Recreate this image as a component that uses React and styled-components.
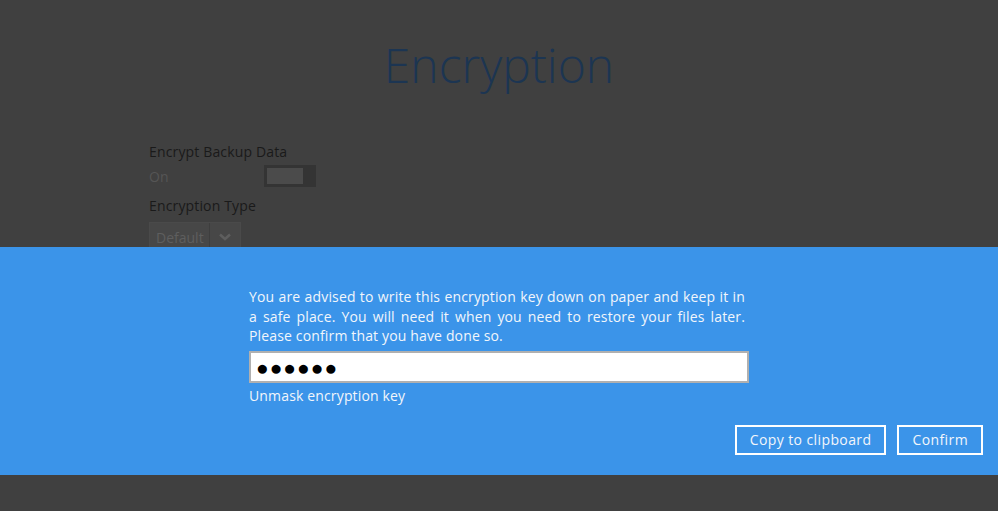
import React from 'react'
import styled, {createGlobalStyle} from 'styled-components'

const Global = createGlobalStyle`
  html, body {
    margin: 0;
    padding: 0;
    background: #404040;
  }
  body {
    font-family: "Open Sans", "Noto Sans", sans-serif;
  }
`

const Page = styled.div`
  width: 998px;
  height: 511px;
  background: #404040;
  display: flex;
  flex-direction: column;
  overflow: hidden;
`

const Top = styled.div`
  height: 247px;
  overflow: hidden;
  flex-shrink: 0;
`

const Title = styled.h1`
  margin: 0;
  padding-top: 28px;
  text-align: center;
  font-weight: 300;
  font-size: 48px;
  line-height: 74px;
  color: #1c3552;
`

const Form = styled.div`
  margin: 40px 0 0 149px;
  display: flex;
  flex-direction: column;
`

const Label = styled.div`
  font-size: 14px;
  line-height: 20px;
  color: #1a1a1a;
  letter-spacing: 0.15px;
`

const Row = styled.div`
  display: flex;
  align-items: center;
  height: 30px;
  margin-bottom: 5px;
  margin-top: -1px;
`

const State = styled.span`
  width: 115px;
  font-size: 14px;
  color: #555;
`

const Toggle = styled.div`
  width: 52px;
  height: 22px;
  box-sizing: border-box;
  border: 3px solid #343434;
  border-right-width: 13px;
  background: #4b4b4b;
`

const Select = styled.div`
  margin-top: 6px;
  width: 92px;
  height: 30px;
  box-sizing: border-box;
  border: 1px solid #4a4a4a;
  background: #474747;
  display: flex;
  align-items: center;
  font-size: 14px;
  color: #5e5e5e;
`

const SelectText = styled.span`
  flex: 1;
  padding-left: 6px;
`

const SelectArrow = styled.span`
  width: 30px;
  height: 100%;
  border-left: 1px solid #3e3e3e;
  display: flex;
  align-items: center;
  justify-content: center;
`

const Panel = styled.div`
  height: 228px;
  flex-shrink: 0;
  background: #3b94e9;
  display: flex;
  flex-direction: column;
`

const Content = styled.div`
  width: 496px;
  margin: 40px 0 0 249px;
  color: #f2f6fb;
  letter-spacing: 0.15px;
`

const Text = styled.p`
  margin: 0;
  font-size: 14px;
  line-height: 19.5px;
  text-align: justify;
`

const KeyInput = styled.div`
  margin-top: 5px;
  width: 500px;
  height: 32px;
  box-sizing: border-box;
  border: 2px solid #b0b0b0;
  background: #fff;
  color: #000;
  display: flex;
  align-items: center;
  padding-left: 5px;
  font-size: 21px;
  letter-spacing: 1px;
`

const Link = styled.div`
  margin-top: 3px;
  font-size: 14px;
  line-height: 20px;
  cursor: pointer;
`

const Actions = styled.div`
  display: flex;
  justify-content: flex-end;
  gap: 11px;
  margin: 19px 15px 0 0;
`

const Button = styled.button`
  height: 30px;
  padding: 0 13px;
  box-sizing: border-box;
  border: 2px solid #fff;
  background: transparent;
  color: #f2f6fb;
  font-family: "Open Sans", "Noto Sans", sans-serif;
  font-size: 14px;
  letter-spacing: 0.4px;
`

export default function App () {
  return (
    <Page>
      <Global />
      <Top>
        <Title>Encryption</Title>
        <Form>
          <Label>Encrypt Backup Data</Label>
          <Row>
            <State>On</State>
            <Toggle />
          </Row>
          <Label>Encryption Type</Label>
          <Select>
            <SelectText>Default</SelectText>
            <SelectArrow>
              <svg width='12' height='8' viewBox='0 0 12 8'>
                <path d='M1 1.5 L6 6 L11 1.5' stroke='#5e5e5e' strokeWidth='2.5' fill='none' />
              </svg>
            </SelectArrow>
          </Select>
        </Form>
      </Top>
      <Panel>
        <Content>
          <Text>
            You are advised to write this encryption key down on paper and keep it in a safe place. You will need it when you need to restore your files later. Please confirm that you have done so.
          </Text>
          <KeyInput>●●●●●●</KeyInput>
          <Link>Unmask encryption key</Link>
        </Content>
        <Actions>
          <Button>Copy to clipboard</Button>
          <Button>Confirm</Button>
        </Actions>
      </Panel>
    </Page>
  )
}
